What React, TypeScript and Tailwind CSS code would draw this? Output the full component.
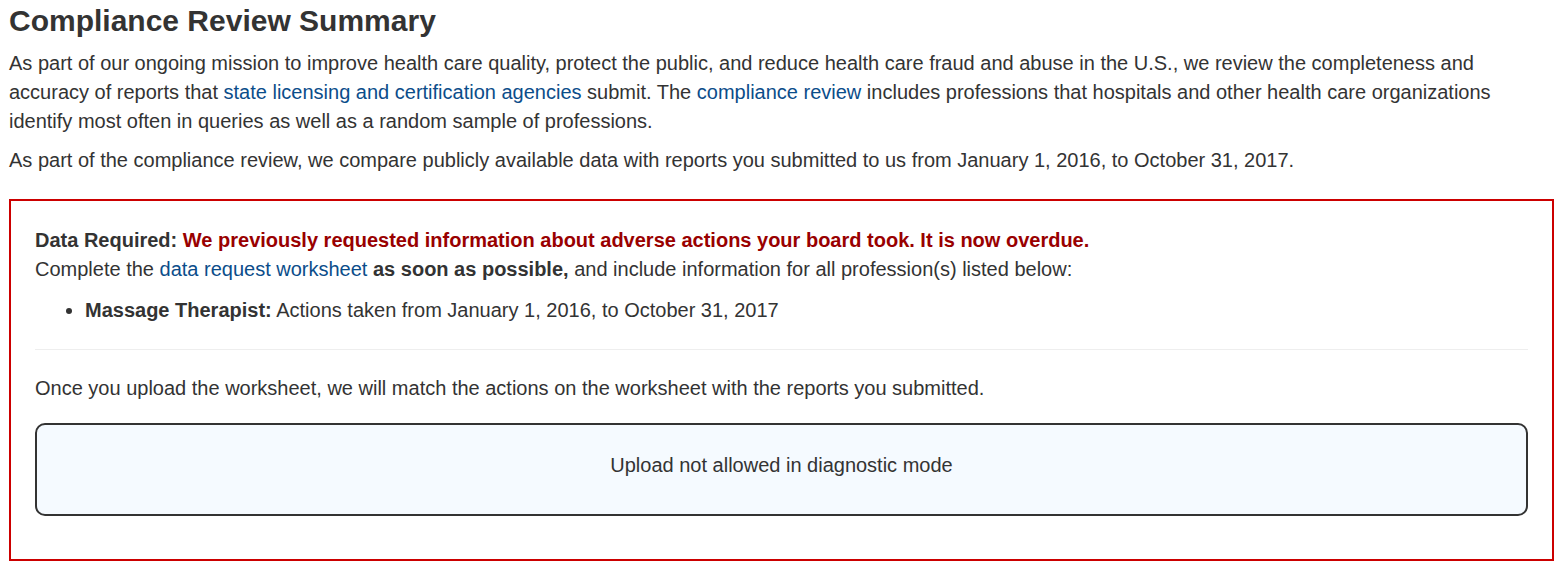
import React from "react";

export default function App() {
  return (
    <div className="bg-white text-[#333] px-[9px] pb-4" style={{ fontFamily: '"Liberation Sans", Arial, sans-serif' }}>
      <h1 className="text-[30px] font-bold leading-[40px] pt-[1px] mb-[8px]">Compliance Review Summary</h1>
      <p className="text-[20px] leading-[29px] mb-[10px]">
        As part of our ongoing mission to improve health care quality, protect the public, and reduce health care fraud and abuse in the U.S., we review the completeness and
        accuracy of reports that <a className="text-[#0b4d8a]">state licensing and certification agencies</a> submit. The{" "}
        <a className="text-[#0b4d8a]">compliance review</a> includes professions that hospitals and other health care organizations identify most often in queries as well as a random sample of professions.
      </p>
      <p className="text-[20px] leading-[29px] mb-[24px]">
        As part of the compliance review, we compare publicly available data with reports you submitted to us from January 1, 2016, to October 31, 2017.
      </p>
      <div className="border-2 border-[#cc0000] w-[1545px] px-[24px] pt-[25px] pb-[43px] text-[20px]">
        <p className="leading-[29px]">
          <b>Data Required:</b>{" "}
          <b className="text-[#990000]">We previously requested information about adverse actions your board took. It is now overdue.</b>
        </p>
        <p className="leading-[29px]">
          Complete the <a className="text-[#0b4d8a]">data request worksheet</a> <b>as soon as possible,</b> and include information for all profession(s) listed below:
        </p>
        <ul className="list-disc pl-[50px] mt-[12px] leading-[29px]">
          <li>
            <b>Massage Therapist:</b> Actions taken from January 1, 2016, to October 31, 2017
          </li>
        </ul>
        <hr className="border-t border-[#eeeeee] mt-[24px] mb-[24px]" />
        <p className="leading-[29px]">Once you upload the worksheet, we will match the actions on the worksheet with the reports you submitted.</p>
        <div className="mt-[20px] h-[93px] border-2 border-[#333] rounded-[10px] bg-[#f5faff] flex items-center justify-center pb-[10px]">
          Upload not allowed in diagnostic mode
        </div>
      </div>
    </div>
  );
}
